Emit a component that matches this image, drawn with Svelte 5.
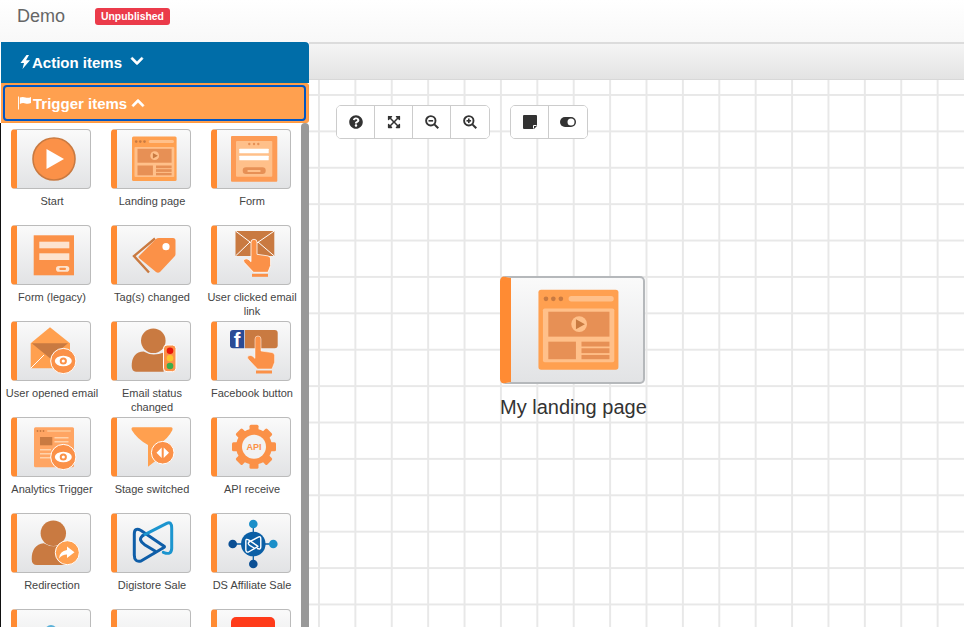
<script>
  const items = [
    { label: 'Start', icon: 'start' },
    { label: 'Landing page', icon: 'landing' },
    { label: 'Form', icon: 'form' },
    { label: 'Form (legacy)', icon: 'legacy' },
    { label: 'Tag(s) changed', icon: 'tags' },
    { label: 'User clicked email link', icon: 'clicked' },
    { label: 'User opened email', icon: 'opened' },
    { label: 'Email status changed', icon: 'status' },
    { label: 'Facebook button', icon: 'facebook' },
    { label: 'Analytics Trigger', icon: 'analytics' },
    { label: 'Stage switched', icon: 'stage' },
    { label: 'API receive', icon: 'api' },
    { label: 'Redirection', icon: 'redirect' },
    { label: 'Digistore Sale', icon: 'digistore' },
    { label: 'DS Affiliate Sale', icon: 'affiliate' },
    { label: '', icon: 'partial-blue' },
    { label: '', icon: 'blank' },
    { label: '', icon: 'partial-red' }
  ];

  const teeth = [0, 45, 90, 135, 180, 225, 270, 315];
  const chevron = 'M207.029 381.476L12.686 187.132c-9.373-9.373-9.373-24.569 0-33.941l22.667-22.667c9.357-9.357 24.522-9.375 33.901-.04L224 284.505l154.745-154.021c9.379-9.335 24.544-9.317 33.901.04l22.667 22.667c9.373 9.373 9.373 24.569 0 33.941L240.971 381.476c-9.373 9.372-24.569 9.372-33.942 0z';
</script>

{#snippet eye(cx, cy)}
  <circle {cx} {cy} r="12.6" fill="#fb9148" stroke="#fff" stroke-width="1" />
  <ellipse {cx} {cy} rx="8.5" ry="5.2" fill="#fff" />
  <circle {cx} {cy} r="3.6" fill="#fb9148" />
  <circle {cx} {cy} r="1.6" fill="#fff" />
{/snippet}

{#snippet hand(x, y)}
  <g transform="translate({x} {y})">
    <path d="M7.5 0a3 3 0 0 1 6 0v12l11 1.6q2.6.4 2.6 3v6.6l-2.6 6.8H10L.6 20q-1.4-2.2.6-3.2 2.2-1 4.2.6l2.100 2z" fill="#fb9148" />
    <rect x="8.5" y="31.5" width="16" height="3" fill="#fb9148" stroke="none" />
  </g>
{/snippet}

{#snippet dslogo(x, y, s, dark, light, mid, w)}
  <g transform="translate({x} {y}) scale({s})" fill="none" stroke-width={w} stroke-linejoin="round" stroke-linecap="round">
    <path d="M30.3 24.7 8 9.500Q1.300 6 1.300 13V34Q1.300 41.500 8 40L30 27Q33 25.700 30.300 24.700z" stroke={dark} />
    <path d="M9.700 14.700 33.700 2.300Q38.700 0 38.700 7.300V27.300Q38.700 34.700 30.300 31.300" stroke={light} />
    <path d="M9.700 14.700Q4.300 19 12 24L22 30" stroke={mid} />
  </g>
{/snippet}

{#snippet icon(name)}
  <svg viewBox="6 1 73 58" class="glyph" aria-hidden="true">
    {#if name === 'start'}
      <circle cx="43" cy="30" r="21" fill="#fb9148" stroke="#c97a41" stroke-width="1.6" />
      <path d="M35.500 20 53 30 35.500 40z" fill="#fff" />
    {:else if name === 'landing'}
      <rect x="21" y="7.500" width="44.600" height="44.600" rx="1.500" fill="#ffa050" />
      <circle cx="25.200" cy="12.600" r="1.300" fill="#c97a41" />
      <circle cx="29.300" cy="12.600" r="1.300" fill="#c97a41" />
      <circle cx="33.500" cy="12.600" r="1.300" fill="#c97a41" />
      <rect x="37.800" y="11.100" width="25.200" height="3" rx="1.500" fill="#ffc08a" />
      <rect x="23.500" y="18" width="39.800" height="30" rx="1" fill="#ffc08a" />
      <rect x="26.500" y="19.800" width="34.100" height="13.900" fill="#e79055" />
      <circle cx="43.700" cy="26.700" r="4.400" fill="#ffc08a" />
      <path d="M41.900 24 46.900 26.800 41.900 29.600z" fill="#c97a41" />
      <rect x="26.500" y="36.500" width="15.400" height="9.800" fill="#e79055" />
      <rect x="45" y="36.500" width="15.600" height="2.700" fill="#e79055" />
      <rect x="45" y="40.200" width="15.600" height="2.700" fill="#e79055" />
      <rect x="45" y="43.900" width="15.600" height="2.400" fill="#e79055" />
    {:else if name === 'form'}
      <rect x="20" y="7" width="46.300" height="45.700" rx="1" fill="#fd9b55" />
      <rect x="25" y="12" width="36.300" height="35.700" rx="1" fill="#ffc08a" />
      <circle cx="38.300" cy="15" r="1.200" fill="#e79055" />
      <circle cx="43" cy="15" r="1.200" fill="#e79055" />
      <circle cx="47.300" cy="15" r="1.200" fill="#e79055" />
      <rect x="28.300" y="19.700" width="29.400" height="4.600" rx=".6" fill="#fff" />
      <rect x="28.300" y="26.700" width="29.400" height="4.600" rx=".6" fill="#fff" />
      <rect x="31.700" y="38.300" width="23" height="6.700" rx="3.300" fill="#e79055" />
      <rect x="36.300" y="41" width="13.400" height="2" rx="1" fill="#ffc08a" />
    {:else if name === 'legacy'}
      <rect x="22.700" y="10.300" width="40.300" height="40" fill="#fb9148" />
      <rect x="28.300" y="16.700" width="30" height="6.600" fill="#fde3cf" />
      <rect x="28.300" y="28.300" width="30" height="6.700" fill="#fde3cf" />
      <rect x="45" y="41" width="13.300" height="5.700" rx="2.800" fill="#fde3cf" />
      <rect x="48.300" y="42.800" width="6.700" height="2.200" rx="1" fill="#fb9148" />
    {:else if name === 'tags'}
      <path d="M44 13.500 23 31 38 47.500" fill="none" stroke="#c97a41" stroke-width="2.400" />
      <path d="M28 31 45 14q1-1 3-1h14q2.500 0 2.500 2.500V29q0 2-1.500 3L49 47q-2 1.500-4 0L28 33q-1-1 0-2z" fill="#fb9148" />
      <circle cx="55" cy="21.700" r="3.600" fill="#fff" />
    {:else if name === 'clicked'}
      <rect x="24.500" y="6" width="38.800" height="25" fill="#c97a41" />
      <path d="M24.500 6 43 20 63.300 6M24.500 31 39 17M63.300 31 47 17" stroke="#fff" stroke-width="1" fill="none" />
      <g stroke="#fff" stroke-width=".8">{@render hand(32.500, 17.300)}</g>
    {:else if name === 'opened'}
      <path d="M19.700 22.300 39 6.300 59 22.300V47.300H19.700z" fill="#ffa04f" />
      <path d="M20.700 22.300H57L39 37.300z" fill="#c97a41" />
      <path d="M19.700 47.300 33 34M59 47.300 45 34" stroke="#fff" stroke-width="1" fill="none" />
      {@render eye(52.300, 40)}
    {:else if name === 'status'}
      <circle cx="42.300" cy="19.700" r="12.300" fill="#c97a41" />
      <path d="M20.700 45q0-14 12-14.500 5 3 10 3t10-2V50.700H25q-4.300 0-4.300-5.700z" fill="#c97a41" />
      <rect x="52.500" y="24" width="12.500" height="26.700" rx="3.500" fill="#fb9148" stroke="#fff" stroke-width="1" />
      <circle cx="59" cy="29.700" r="3.300" fill="#e8140a" />
      <circle cx="59" cy="37.300" r="3.300" fill="#fdc42e" />
      <circle cx="59" cy="45" r="3.300" fill="#3bad4c" />
    {:else if name === 'facebook'}
      <path d="M22 9h11.300v18.300H22q-3 0-3-3V12q0-3 3-3z" fill="#2a4b95" />
      <text x="22.800" y="26.300" class="fb">f</text>
      <path d="M34 9h29.700q3 0 3 3v12.300q0 3-3 3H34z" fill="#c97a41" />
      <g stroke="#fff" stroke-width=".5">{@render hand(36.500, 18)}</g>
    {:else if name === 'analytics'}
      <rect x="23" y="10.300" width="40" height="40" rx="1.500" fill="#ffa563" />
      <circle cx="26.500" cy="14" r=".9" fill="#c97a41" />
      <circle cx="29.500" cy="14" r=".9" fill="#c97a41" />
      <circle cx="32.500" cy="14" r=".9" fill="#c97a41" />
      <rect x="36" y="13" width="24" height="2" rx="1" fill="#ffc08a" />
      <rect x="29" y="20" width="12.300" height="8.300" fill="#c97a41" />
      <rect x="43.500" y="20" width="14" height="1.500" fill="#ffd2aa" />
      <rect x="43.500" y="24" width="14" height="1.500" fill="#ffd2aa" />
      <rect x="29" y="32" width="11" height="1.500" fill="#ffd2aa" />
      <rect x="29" y="36" width="11" height="1.500" fill="#ffd2aa" />
      <rect x="29" y="40" width="11" height="1.500" fill="#ffd2aa" />
      {@render eye(52.300, 40)}
    {:else if name === 'stage'}
      <path d="M22 10.300H60q2.200 0 1.300 3Q57 22 47 28V42L37 49.700V28Q26 22 20.700 13q-.7-2.700 1.300-2.700z" fill="#ffa04f" />
      <circle cx="51.700" cy="35.700" r="11.300" fill="#fb9148" stroke="#fff" stroke-width="1" />
      <path d="M50.700 30.500V41L45.500 35.700zM52.700 30.500V41L58 35.700z" fill="#fff" />
    {:else if name === 'api'}
      <g fill="#fb9148">
        {#each teeth as a}
          <rect x="38.500" y="7.700" width="9" height="8" rx="1.500" transform="rotate({a} 43 29.700)" />
        {/each}
      </g>
      <circle cx="43" cy="29.700" r="18" fill="#fb9148" />
      <circle cx="43" cy="29.700" r="12" fill="#f2f2f2" />
      <text x="43" y="33" class="api">API</text>
    {:else if name === 'redirect'}
      <circle cx="42.300" cy="20.300" r="12.700" fill="#c97a41" />
      <path d="M20.700 46q0-14 12-15.700 5 3 10 3t12 -2.500V52H26q-5.300 0-5.300-6z" fill="#c97a41" />
      <circle cx="56.300" cy="39.700" r="12" fill="#ffa04f" stroke="#fff" stroke-width="1" />
      <path d="M56 33.500 63.500 39.300 56 45V41.500q-5 0-8 4 .5-7.500 8-8.500z" fill="#fff" />
    {:else if name === 'digistore'}
      {@render dslogo(22, 8, 1, '#0f5ea8', '#1c95cf', '#0f5ea8', 3)}
    {:else if name === 'affiliate'}
      <path d="M42.300 11V51M21.700 31H62.300" stroke="#0b5fa5" stroke-width="1.300" />
      <circle cx="42.300" cy="11" r="4.300" fill="#1b8fc9" />
      <circle cx="42.300" cy="51" r="4.300" fill="#0b4f94" />
      <circle cx="21.700" cy="31" r="4.300" fill="#0b4f94" />
      <circle cx="62.300" cy="31" r="4.300" fill="#1b8fc9" />
      <circle cx="42.300" cy="31" r="12.300" fill="#0b5fa5" />
      {@render dslogo(34.300, 23, .4, '#fff', '#fff', '#fff', 3.500)}
    {:else if name === 'partial-blue'}
      <circle cx="40" cy="22" r="6" fill="#5ab0d8" />
    {:else if name === 'partial-red'}
      <rect x="20" y="8" width="44" height="36" rx="5" fill="#ff3b1a" />
    {/if}
  </svg>
{/snippet}

<div class="page">
  <header class="topbar">
    <span class="title">Demo</span>
    <span class="badge">Unpublished</span>
  </header>

  <div class="body">
    <aside class="sidebar">
      <div class="panel-head action">
        <svg class="bolt" viewBox="0 0 10 14" aria-hidden="true"><path d="M6.500 0 .5 8H4L2.500 14 10 5.300H6L9 0z" /></svg>
        <span>Action items</span>
        <svg class="chev" viewBox="0 0 448 512" aria-hidden="true"><path d={chevron} /></svg>
      </div>
      <div class="trigger-wrap">
        <div class="panel-head trigger">
          <svg class="flag" viewBox="0 0 14 14" aria-hidden="true">
            <rect x="0" y="0" width="1" height="14" />
            <path d="M2 1q3-1 6 0t6-.5V7q-3 1.500-6 .5T2 8z" />
          </svg>
          <span>Trigger items</span>
          <svg class="chev up" viewBox="0 0 448 512" aria-hidden="true"><path d={chevron} /></svg>
        </div>
      </div>
      <div class="list-wrap">
        <div class="list">
          {#each items as item}
            <div class="item">
              <div class="card">{@render icon(item.icon)}</div>
              <div class="label">{item.label}</div>
            </div>
          {/each}
        </div>
        <div class="scrollbar"></div>
      </div>
    </aside>

    <main class="main">
      <div class="strip"></div>
      <div class="canvas">
        <div class="tools">
          <div class="group">
            <button aria-label="Help">
              <svg viewBox="0 0 512 512"><path d="M504 256c0 136.997-111.043 248-248 248S8 392.997 8 256C8 119.083 119.043 8 256 8s248 111.083 248 248zM262.655 90c-54.497 0-89.255 22.957-116.549 63.758-3.536 5.286-2.353 12.415 2.715 16.258l34.699 26.310c5.205 3.947 12.621 3.008 16.665-2.122 17.864-22.658 30.113-35.797 57.303-35.797 20.429 0 45.698 13.148 45.698 32.958 0 14.976-12.363 22.667-32.534 33.976C247.128 238.528 216 254.941 216 296v4c0 6.627 5.373 12 12 12h56c6.627 0 12-5.373 12-12v-1.333c0-28.462 83.186-29.647 83.186-106.667 0-58.002-60.165-102-116.531-102zM256 338c-25.365 0-46 20.635-46 46 0 25.364 20.635 46 46 46s46-20.636 46-46c0-25.365-20.635-46-46-46z" /></svg>
            </button>
            <button aria-label="Fit">
              <svg viewBox="0 0 448 512"><path d="M448 344v112a23.940 23.940 0 0 1-24 24H312c-21.390 0-32.090-25.900-17-41l36.200-36.200L224 295.600 116.770 402.900 153 439c15.090 15.100 4.390 41-17 41H24a23.940 23.940 0 0 1-24-24V344c0-21.400 25.890-32.100 41-17l36.190 36.200L184.460 256 77.180 148.700 41 185c-15.100 15.100-41 4.400-41-17V56a23.940 23.940 0 0 1 24-24h112c21.390 0 32.090 25.900 17 41l-36.200 36.200L224 216.400l107.230-107.300L295 73c-15.090-15.100-4.390-41 17-41h112a23.940 23.940 0 0 1 24 24v112c0 21.400-25.890 32.100-41 17l-36.190-36.200L263.540 256l107.280 107.300L407 327.100c15.100-15.200 41-4.500 41 16.900z" /></svg>
            </button>
            <button aria-label="Zoom out">
              <svg viewBox="0 0 14 14">
                <circle cx="5.800" cy="5.800" r="4.700" fill="none" stroke="#333" stroke-width="1.900" />
                <rect x="3.500" y="5" width="4.600" height="1.600" />
                <path d="M9.500 8.300 14 12.500 12.500 14 8.200 9.600z" />
              </svg>
            </button>
            <button aria-label="Zoom in">
              <svg viewBox="0 0 14 14">
                <circle cx="5.800" cy="5.800" r="4.700" fill="none" stroke="#333" stroke-width="1.900" />
                <rect x="3.500" y="5" width="4.600" height="1.600" />
                <rect x="5" y="3.500" width="1.600" height="4.600" />
                <path d="M9.500 8.300 14 12.500 12.500 14 8.200 9.600z" />
              </svg>
            </button>
          </div>
          <div class="group">
            <button aria-label="Note">
              <svg viewBox="0 0 14 14">
                <path d="M1 0H13Q14 0 14 1V11L11 14H1Q0 14 0 13V1Q0 0 1 0z" />
                <path d="M10.500 13.500V10.500H13.500" fill="none" stroke="#fff" stroke-width="1" />
              </svg>
            </button>
            <button aria-label="Toggle">
              <svg viewBox="0 0 16 10" class="wide"><rect width="16" height="10" rx="5" /><circle cx="11" cy="5" r="3.500" fill="#fff" /></svg>
            </button>
          </div>
        </div>

        <div class="node">
          <div class="node-card">{@render icon('landing')}</div>
          <div class="node-label">My landing page</div>
        </div>
      </div>
    </main>
  </div>
</div>

<style>
  :global(body) { margin: 0; background: #fff; font-family: "Liberation Sans", Arial, sans-serif; }
  .page { width: 964px; height: 627px; overflow: hidden; display: flex; flex-direction: column; }

  .topbar {
    height: 42px; flex: none; box-sizing: border-box; padding: 0 17px 10px;
    display: flex; align-items: center;
    background: linear-gradient(#fff, #f8f8f8);
  }
  .title { font-size: 18px; color: #666; width: 78px; }
  .badge {
    background: #eb3b4a; color: #fff; font-size: 10.4px; font-weight: 700;
    padding: 0 6px; height: 17px; line-height: 17px; border-radius: 3px;
  }

  .body { flex: 1; display: flex; min-height: 0; }
  .sidebar { width: 309px; flex: none; display: flex; flex-direction: column; box-sizing: border-box; background: #fff; }

  .panel-head { display: flex; align-items: center; color: #fff; font-size: 15px; font-weight: 700; }
  .panel-head svg { fill: #fff; flex: none; }
  .action {
    height: 41px; flex: none; background: #006da8; padding-left: 19px; padding-bottom: 1px; margin-left: 1px;
    box-sizing: border-box; border-radius: 0 4px 0 0;
  }
  .bolt { width: 10px; height: 14px; margin-right: 2px; }
  .chev { width: 14px; height: 14px; margin-left: 8px; margin-top: -2px; stroke: #fff; stroke-width: 24px; }
  .chev.up { transform: rotate(180deg); margin-top: 0; margin-left: 4px; }

  .trigger-wrap {
    height: 40px; flex: none; box-sizing: border-box; padding: 1px 2px; margin-left: 1px;
    background: #ffa04f; border: 1px solid #ff9a40; border-left: 0; border-radius: 0 3px 3px 0;
  }
  .trigger {
    height: 36px; box-sizing: border-box; background: #ffa04f; padding-left: 13px;
    border: 2px solid #0056c4; border-radius: 4px;
  }
  .flag { width: 13px; height: 14px; margin-right: 2px; }

  .list-wrap { flex: 1; display: flex; min-height: 0; border-left: 1px solid #111; }
  .list {
    flex: 1; padding: 6px 0 0 1px; overflow: hidden;
    display: grid; grid-template-columns: repeat(3, 100px); grid-auto-rows: 96px;
  }
  .scrollbar { width: 8px; flex: none; background: #999; border-radius: 4px 4px 0 0; }

  .item { text-align: center; }
  .card {
    width: 80px; height: 60px; box-sizing: border-box; margin-left: 9px;
    border: 1px solid #bbb; border-left: 6px solid #ff8b33; border-radius: 4px;
    background: linear-gradient(#fafafa, #e2e3e5); overflow: hidden;
  }
  .glyph { display: block; width: 100%; height: 100%; }
  .label { margin-top: 5px; font-size: 11px; line-height: 14px; color: #444; }
  .fb { font: 700 20px "Liberation Sans", sans-serif; fill: #fff; }
  .api { font: 700 9px "Liberation Sans", sans-serif; fill: #fb9148; text-anchor: middle; }

  .main { flex: 1; min-width: 0; display: flex; flex-direction: column; }
  .strip {
    height: 38px; flex: none; box-sizing: border-box;
    background: linear-gradient(#f5f5f5, #e3e3e3);
    border-top: 2px solid #dcdcdc; border-bottom: 1px solid #d8d8d8;
  }
  .canvas {
    flex: 1; position: relative; background-color: #fff;
    background-image:
      linear-gradient(90deg, #e8e8e8 1.6px, transparent 1.6px),
      linear-gradient(#e8e8e8 1.6px, transparent 1.6px);
    background-size: 36.4px 36.4px;
    background-position: 9px 14px;
  }

  .tools { position: absolute; left: 27px; top: 25px; display: flex; gap: 20px; }
  .group {
    display: flex; height: 34px; background: #fff; box-sizing: border-box;
    border: 1px solid #ccc; border-radius: 5px; overflow: hidden;
  }
  .group button {
    width: 38px; padding: 0; border: 0; border-right: 1px solid #ccc; background: #fff;
    display: flex; align-items: center; justify-content: center;
  }
  .group button:last-child { border-right: 0; }
  .group svg { width: 14px; height: 14px; fill: #333; }
  .group svg.wide { width: 16px; height: 10px; }

  .node { position: absolute; left: 191px; top: 196px; }
  .node-card {
    width: 145px; height: 108px; box-sizing: border-box;
    border: 2px solid #b5b8bb; border-left: 11px solid #ff8b33; border-radius: 5px;
    background: linear-gradient(#fafafa, #e2e3e5); overflow: hidden;
  }
  .node-label { margin-top: 12px; font-size: 20px; line-height: 23px; color: #333; white-space: nowrap; }
</style>
